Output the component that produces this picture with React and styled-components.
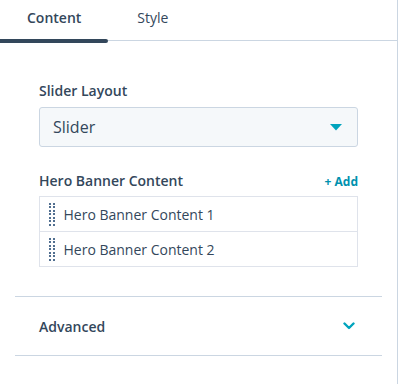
import React, { useState } from 'react';
import styled, { createGlobalStyle } from 'styled-components';

const GlobalStyle = createGlobalStyle`
  html, body {
    margin: 0;
    padding: 0;
    background: #fff;
  }
  body {
    font-family: "Open Sans", "Noto Sans", sans-serif;
    color: #33475b;
  }
`;

const Panel = styled.div`
  width: 397px;
  height: 384px;
  border-right: 1px solid #cbd6e2;
  box-sizing: content-box;
  overflow: hidden;
`;

const TabBar = styled.div`
  display: flex;
  height: 41px;
  border-bottom: 1px solid #cbd6e2;
  box-sizing: border-box;
`;

const Tab = styled.button`
  position: relative;
  height: 100%;
  padding: 0 ${(p) => p.$pad}px;
  border: none;
  background: none;
  font-family: inherit;
  font-size: 14px;
  font-weight: ${(p) => (p.$active ? 600 : 400)};
  color: #33475b;
  cursor: pointer;
  padding-bottom: 6px;

  &::after {
    content: '';
    display: ${(p) => (p.$active ? 'block' : 'none')};
    position: absolute;
    left: 0;
    right: 0;
    bottom: -3px;
    height: 4px;
    border-radius: 0 2px 2px 0;
    background: #33475b;
  }
`;

const Body = styled.div`
  padding: 0 15px;
`;

const Fields = styled.div`
  padding: 40px 24px 29px;
  border-bottom: 1px solid #cbd6e2;
`;

const Label = styled.div`
  font-size: 14px;
  font-weight: 600;
  line-height: 20px;
`;

const LabelRow = styled.div`
  display: flex;
  justify-content: space-between;
  align-items: center;
  margin-top: 24px;
`;

const AddButton = styled.button`
  border: none;
  background: none;
  padding: 0;
  font-family: inherit;
  font-size: 12px;
  font-weight: 700;
  color: #0091ae;
  cursor: pointer;
`;

const Select = styled.div`
  margin-top: 6px;
  height: 40px;
  box-sizing: border-box;
  display: flex;
  align-items: center;
  justify-content: space-between;
  padding: 0 15px 0 13px;
  background: #f5f8fa;
  border: 1px solid #cbd6e2;
  border-radius: 3px;
  font-size: 16px;
  cursor: pointer;
`;

const List = styled.div`
  margin-top: 5px;
  border: 1px solid #dfe3eb;
`;

const Item = styled.div`
  display: flex;
  align-items: center;
  gap: 9px;
  height: 34px;
  padding-left: 9px;
  font-size: 14px;
  & + & {
    border-top: 1px solid #dfe3eb;
  }
`;

const Grip = styled.span`
  display: grid;
  grid-template-columns: repeat(2, 2px);
  grid-auto-rows: 2px;
  column-gap: 1.5px;
  row-gap: 1.5px;
  i {
    background: #516f90;
  }
`;

const Accordion = styled.button`
  display: flex;
  width: 100%;
  height: 59px;
  align-items: center;
  justify-content: space-between;
  padding: 0 27px 0 24px;
  border: none;
  border-bottom: 1px solid #cbd6e2;
  background: none;
  font-family: inherit;
  font-size: 14px;
  font-weight: 600;
  color: #33475b;
  cursor: pointer;
`;

const GripDots = () => (
  <Grip>
    {Array.from({ length: 14 }).map((_, i) => (
      <i key={i} />
    ))}
  </Grip>
);

const items = ['Hero Banner Content 1', 'Hero Banner Content 2'];

export default function App() {
  const [tab, setTab] = useState('content');

  return (
    <>
      <GlobalStyle />
      <Panel>
        <TabBar>
          <Tab $pad={27} $active={tab === 'content'} onClick={() => setTab('content')}>
            Content
          </Tab>
          <Tab $pad={29} $active={tab === 'style'} onClick={() => setTab('style')}>
            Style
          </Tab>
        </TabBar>
        <Body>
          <Fields>
            <Label>Slider Layout</Label>
            <Select>
              <span>Slider</span>
              <svg width="12" height="7" viewBox="0 0 12 7">
                <path d="M0 0h12L6 6.5z" fill="#00a4bd" />
              </svg>
            </Select>
            <LabelRow>
              <Label>Hero Banner Content</Label>
              <AddButton>+ Add</AddButton>
            </LabelRow>
            <List>
              {items.map((name) => (
                <Item key={name}>
                  <GripDots />
                  {name}
                </Item>
              ))}
            </List>
          </Fields>
          <Accordion>
            <span>Advanced</span>
            <svg width="12" height="8" viewBox="0 0 12 8">
              <path d="M1.5 1.5L6 6l4.5-4.5" fill="none" stroke="#00a4bd" strokeWidth="2.4" strokeLinecap="round" strokeLinejoin="round" />
            </svg>
          </Accordion>
        </Body>
      </Panel>
    </>
  );
}
